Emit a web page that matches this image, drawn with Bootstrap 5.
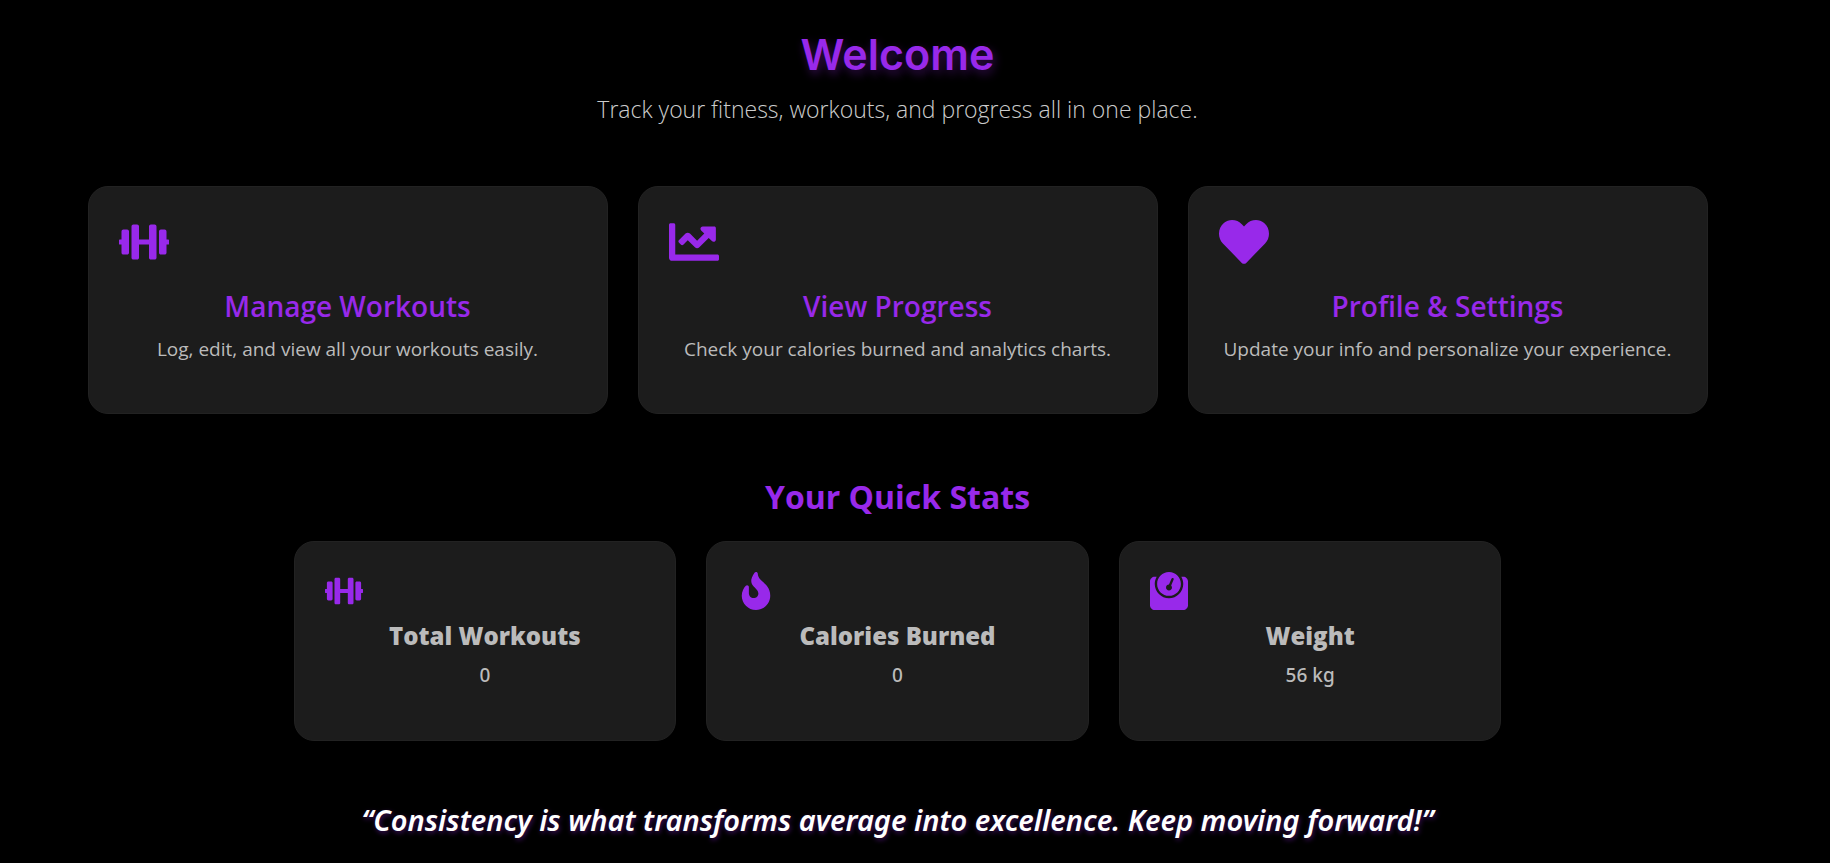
<!DOCTYPE html>
<html lang="en">
<head>
<meta charset="utf-8">
<meta name="viewport" content="width=device-width, initial-scale=1">
<title>Fitness Tracker</title>
<link rel="stylesheet" href="https://cdn.jsdelivr.net/npm/bootstrap@5.3.0/dist/css/bootstrap.min.css">
<style>
  :root { --accent: #9829ea; --soft: #bbbbbb; --panel: #1c1c1c; }
  body { background: #000; color: var(--soft); font-family: "Open Sans", "Noto Sans", sans-serif; }
  .dashboard { padding: 30px 35px 20px 0; }
  .features { max-width: 1620px; gap: 30px; }
  .quick-stats { max-width: 1208px; gap: 30px; }
  .features, .quick-stats { display: grid; grid-template-columns: repeat(auto-fit, minmax(260px, 1fr)); }
  .hero-title { font: 600 43px/48px "Inter", sans-serif; color: var(--accent); text-shadow: 2px 4px 10px rgba(155, 40, 235, .35); margin-bottom: 12px; }
  .hero-text { font-size: 23px; font-weight: 300; line-height: 38px; color: #ccc; margin-bottom: 58px; }
  .panel { background: var(--panel); border: 1px solid #222; border-radius: 20px; padding: 30px; color: var(--soft); }
  .panel-title { font-size: 28px; font-weight: 600; line-height: 38px; color: var(--accent); margin: 20px 0 8px; }
  .panel-text { font-size: 19px; line-height: 32px; margin-bottom: 18px; }
  .section-title { font-size: 32px; font-weight: 700; line-height: 42px; color: var(--accent); margin: 62px 0 23px; }
  .stat-title { font-size: 24px; font-weight: 800; line-height: 32px; margin: 10px 0 8px; }
  .stat-value { font-family: "Noto Sans", sans-serif; font-size: 19px; font-weight: 500; line-height: 30px; margin-bottom: 20px; }
  .quote { font: italic 600 29px/46px "Noto Sans", sans-serif; color: #fff; text-shadow: 1px 2px 5px rgba(155, 40, 235, .4); margin: 56px 0 0; }
  .icon { display: block; fill: var(--accent); width: 50px; height: 50px; }
  .icon-sm { width: 38px; height: 38px; }
</style>
</head>
<body>
<svg class="d-none" aria-hidden="true">
  <symbol id="dumbbell" viewBox="0 0 640 512"><path d="M104 96H56c-13.3 0-24 10.7-24 24v104H8c-4.4 0-8 3.6-8 8v48c0 4.4 3.6 8 8 8h24v104c0 13.3 10.7 24 24 24h48c13.3 0 24-10.7 24-24V120c0-13.3-10.7-24-24-24zm528 128h-24V120c0-13.3-10.7-24-24-24h-48c-13.3 0-24 10.7-24 24v272c0 13.3 10.7 24 24 24h48c13.3 0 24-10.7 24-24V288h24c4.4 0 8-3.6 8-8v-48c0-4.4-3.6-8-8-8zM456 32h-48c-13.3 0-24 10.7-24 24v168H256V56c0-13.3-10.7-24-24-24h-48c-13.3 0-24 10.7-24 24v400c0 13.3 10.7 24 24 24h48c13.3 0 24-10.7 24-24V288h128v168c0 13.3 10.7 24 24 24h48c13.3 0 24-10.7 24-24V56c0-13.3-10.7-24-24-24z"/></symbol>
</svg>
<main class="dashboard text-center">
  <header>
    <h1 class="hero-title">Welcome</h1>
    <p class="hero-text">Track your fitness, workouts, and progress all in one place.</p>
  </header>

  <section class="features mx-auto">
    <article class="panel">
      <svg class="icon" aria-hidden="true"><use href="#dumbbell"/></svg>
      <h2 class="panel-title">Manage Workouts</h2>
      <p class="panel-text">Log, edit, and view all your workouts easily.</p>
    </article>
    <article class="panel">
      <svg class="icon" viewBox="0 0 512 512" aria-hidden="true"><path d="M496 384H64V80c0-8.84-7.16-16-16-16H16C7.16 64 0 71.16 0 80v336c0 17.67 14.33 32 32 32h464c8.84 0 16-7.16 16-16v-32c0-8.84-7.16-16-16-16zM464 96H345.94c-21.38 0-32.09 25.85-16.97 40.97l32.4 32.4L288 242.75l-73.37-73.37c-12.5-12.5-32.76-12.5-45.25 0l-68.69 68.69c-6.25 6.25-6.25 16.38 0 22.63l22.62 22.62c6.25 6.25 16.38 6.25 22.63 0L192 237.25l73.37 73.37c12.5 12.5 32.76 12.5 45.25 0l96-96 32.4 32.4c15.12 15.12 40.97 4.41 40.97-16.97V112c.01-8.84-7.15-16-15.99-16z"/></svg>
      <h2 class="panel-title">View Progress</h2>
      <p class="panel-text">Check your calories burned and analytics charts.</p>
    </article>
    <article class="panel">
      <svg class="icon" viewBox="0 0 512 512" aria-hidden="true"><path d="M462.3 62.6C407.5 15.9 326 24.3 275.7 76.2L256 96.5l-19.7-20.3C186.1 24.3 104.5 15.9 49.7 62.6c-62.8 53.6-66.1 149.8-9.9 207.9l193.5 199.8c12.5 12.9 32.8 12.9 45.3 0l193.5-199.8c56.3-58.1 53-154.3-9.8-207.9z"/></svg>
      <h2 class="panel-title">Profile &amp; Settings</h2>
      <p class="panel-text">Update your info and personalize your experience.</p>
    </article>
  </section>

  <section>
    <h2 class="section-title">Your Quick Stats</h2>
    <div class="quick-stats mx-auto">
      <article class="panel">
        <svg class="icon icon-sm" aria-hidden="true"><use href="#dumbbell"/></svg>
        <h3 class="stat-title">Total Workouts</h3>
        <p class="stat-value">0</p>
      </article>
      <article class="panel">
        <svg class="icon icon-sm" viewBox="0 0 384 512" aria-hidden="true"><path d="M216 23.86c0-23.8-30.65-32.77-44.15-13.04C48 191.85 224 200 224 288c0 35.63-29.11 64.46-64.85 63.99-35.17-.45-63.15-29.77-63.15-64.94v-85.51c0-21.7-26.47-32.23-41.43-16.5C27.8 213.16 0 261.33 0 320c0 105.87 86.13 192 192 192s192-86.13 192-192c0-170.29-168-193-168-296.14z"/></svg>
        <h3 class="stat-title">Calories Burned</h3>
        <p class="stat-value">0</p>
      </article>
      <article class="panel">
        <svg class="icon icon-sm" viewBox="0 0 512 512" aria-hidden="true"><path d="M448 64h-25.98C438.44 92.28 448 125.01 448 160c0 105.87-86.13 192-192 192S64 265.87 64 160c0-34.99 9.56-67.72 25.98-96H64C28.71 64 0 92.71 0 128v320c0 35.29 28.71 64 64 64h384c35.29 0 64-28.71 64-64V128c0-35.29-28.71-64-64-64zM256 320c88.37 0 160-71.63 160-160S344.37 0 256 0 96 71.63 96 160s71.63 160 160 160zm-.3-151.94l33.58-78.36c3.5-8.17 12.94-11.92 21.03-8.41 8.12 3.48 11.88 12.89 8.41 21l-33.67 78.55C291.73 188 296 197.45 296 208c0 22.09-17.91 40-40 40s-40-17.91-40-40c0-21.98 17.76-39.77 39.7-39.94z"/></svg>
        <h3 class="stat-title">Weight</h3>
        <p class="stat-value">56 kg</p>
      </article>
    </div>
  </section>

  <p class="quote">“Consistency is what transforms average into excellence. Keep moving forward!”</p>
</main>
<script src="https://cdn.jsdelivr.net/npm/bootstrap@5.3.0/dist/js/bootstrap.bundle.min.js"></script>
</body>
</html>
